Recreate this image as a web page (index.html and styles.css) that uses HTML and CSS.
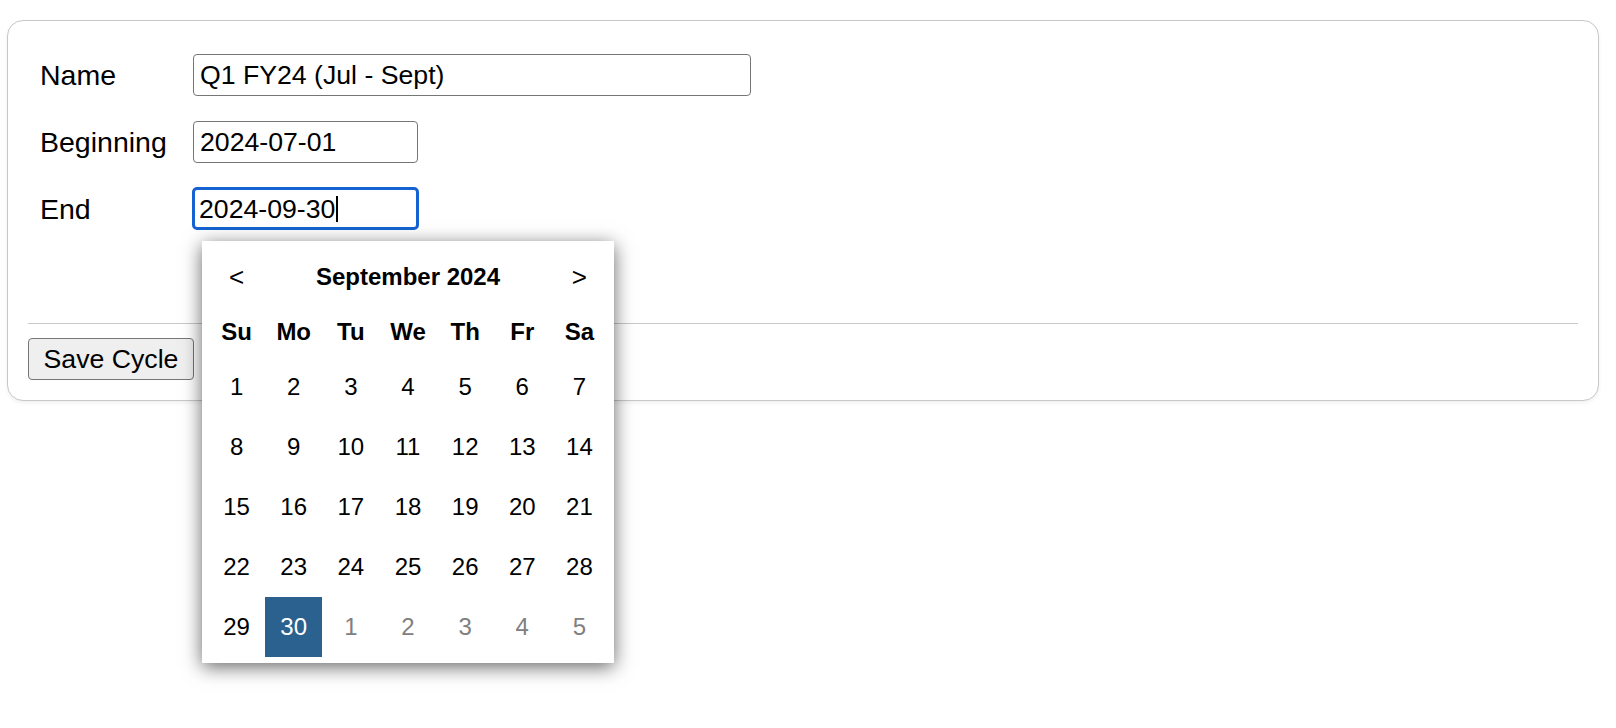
FILE: index.html
```html
<!DOCTYPE html>
<html lang="en">
<head>
<meta charset="utf-8">
<title>Cycle</title>
<link rel="stylesheet" href="styles.css">
</head>
<body>
<div class="card">
  <div class="form-grid">
    <div class="label">Name</div>
    <div class="field"><div class="input input-wide">Q1 FY24 (Jul - Sept)</div></div>
    <div class="label">Beginning</div>
    <div class="field"><div class="input input-date">2024-07-01</div></div>
    <div class="label">End</div>
    <div class="field field-end">
      <div class="input input-date input-focus">2024-09-30<span class="caret"></span></div>
      <div class="calendar">
        <div class="cal-head">
          <span class="cal-nav">&lt;</span>
          <span class="cal-title">September 2024</span>
          <span class="cal-nav">&gt;</span>
        </div>
        <div class="cal-grid">
          <span class="wd">Su</span><span class="wd">Mo</span><span class="wd">Tu</span><span class="wd">We</span><span class="wd">Th</span><span class="wd">Fr</span><span class="wd">Sa</span>
          <span class="day">1</span><span class="day">2</span><span class="day">3</span><span class="day">4</span><span class="day">5</span><span class="day">6</span><span class="day">7</span>
          <span class="day">8</span><span class="day">9</span><span class="day">10</span><span class="day">11</span><span class="day">12</span><span class="day">13</span><span class="day">14</span>
          <span class="day">15</span><span class="day">16</span><span class="day">17</span><span class="day">18</span><span class="day">19</span><span class="day">20</span><span class="day">21</span>
          <span class="day">22</span><span class="day">23</span><span class="day">24</span><span class="day">25</span><span class="day">26</span><span class="day">27</span><span class="day">28</span>
          <span class="day">29</span><span class="day selected">30</span><span class="day other">1</span><span class="day other">2</span><span class="day other">3</span><span class="day other">4</span><span class="day other">5</span>
        </div>
      </div>
    </div>
  </div>
  <div class="divider"></div>
  <div class="actions">
    <button class="btn" type="button">Save Cycle</button>
  </div>
</div>
</body>
</html>
```

FILE: styles.css
```css
html, body {
  margin: 0;
  padding: 0;
  background: #ffffff;
}

html {
  min-height: 100%;
}

body {
  font-family: "Liberation Sans", Arial, Helvetica, sans-serif;
  color: #000000;
  padding: 20px 17px 0 7px;
  min-height: 728px;
  box-sizing: border-box;
}

.card {
  border: 1px solid #c8c8c8;
  border-radius: 16px;
  padding: 20px;
  box-shadow: 0 2px 4px rgba(0, 0, 0, 0.06);
  background: #ffffff;
}

.form-grid {
  display: grid;
  grid-template-columns: 153px auto;
  row-gap: 25px;
  align-items: center;
  padding: 13px 12px 93px;
}

.label {
  font-size: 28.5px;
  line-height: 42px;
}

.field {
  display: flex;
}

.field-end {
  position: relative;
}

.input {
  box-sizing: border-box;
  height: 42px;
  border: 1px solid #767676;
  border-radius: 4px;
  padding: 0 6px;
  font-size: 26.67px;
  line-height: 40px;
  white-space: nowrap;
  background: #ffffff;
}

.input-wide {
  width: 558px;
}

.input-date {
  width: 225px;
}

.input-focus {
  border: 3px solid #1463d0;
  padding: 0 4px;
  line-height: 36px;
  width: 227px;
  margin-left: -1px;
  margin-top: -1px;
  height: 43px;
  border-radius: 5px;
  display: flex;
  align-items: center;
}

.caret {
  display: inline-block;
  width: 2px;
  height: 26px;
  background: #000000;
  margin-left: 1px;
}

.calendar {
  position: absolute;
  top: 53px;
  left: 9px;
  width: 412px;
  box-sizing: border-box;
  padding: 6px;
  background: #ffffff;
  box-shadow: 0 4px 18px rgba(0, 0, 0, 0.6);
  font-size: 24px;
  z-index: 10;
}

.cal-head {
  display: grid;
  grid-template-columns: 1fr 5fr 1fr;
  height: 60px;
  align-items: center;
  text-align: center;
}

.cal-nav {
  font-size: 26px;
}

.cal-title {
  font-weight: bold;
}

.cal-grid {
  display: grid;
  grid-template-columns: repeat(7, 1fr);
  grid-auto-rows: 60px;
  grid-template-rows: 50px;
}

.wd, .day {
  display: flex;
  align-items: center;
  justify-content: center;
}

.wd {
  font-weight: bold;
}

.day.other {
  color: #808080;
}

.day.selected {
  background: #2b618f;
  color: #ffffff;
}

.divider {
  border-top: 1px solid #c8c8c8;
}

.actions {
  padding-top: 14px;
}

.btn {
  box-sizing: border-box;
  width: 166px;
  height: 42px;
  font-family: "Liberation Sans", Arial, Helvetica, sans-serif;
  font-size: 26.67px;
  color: #000000;
  background: #efefef;
  border: 1px solid #767676;
  border-radius: 4px;
  padding: 0;
  display: block;
}
```
